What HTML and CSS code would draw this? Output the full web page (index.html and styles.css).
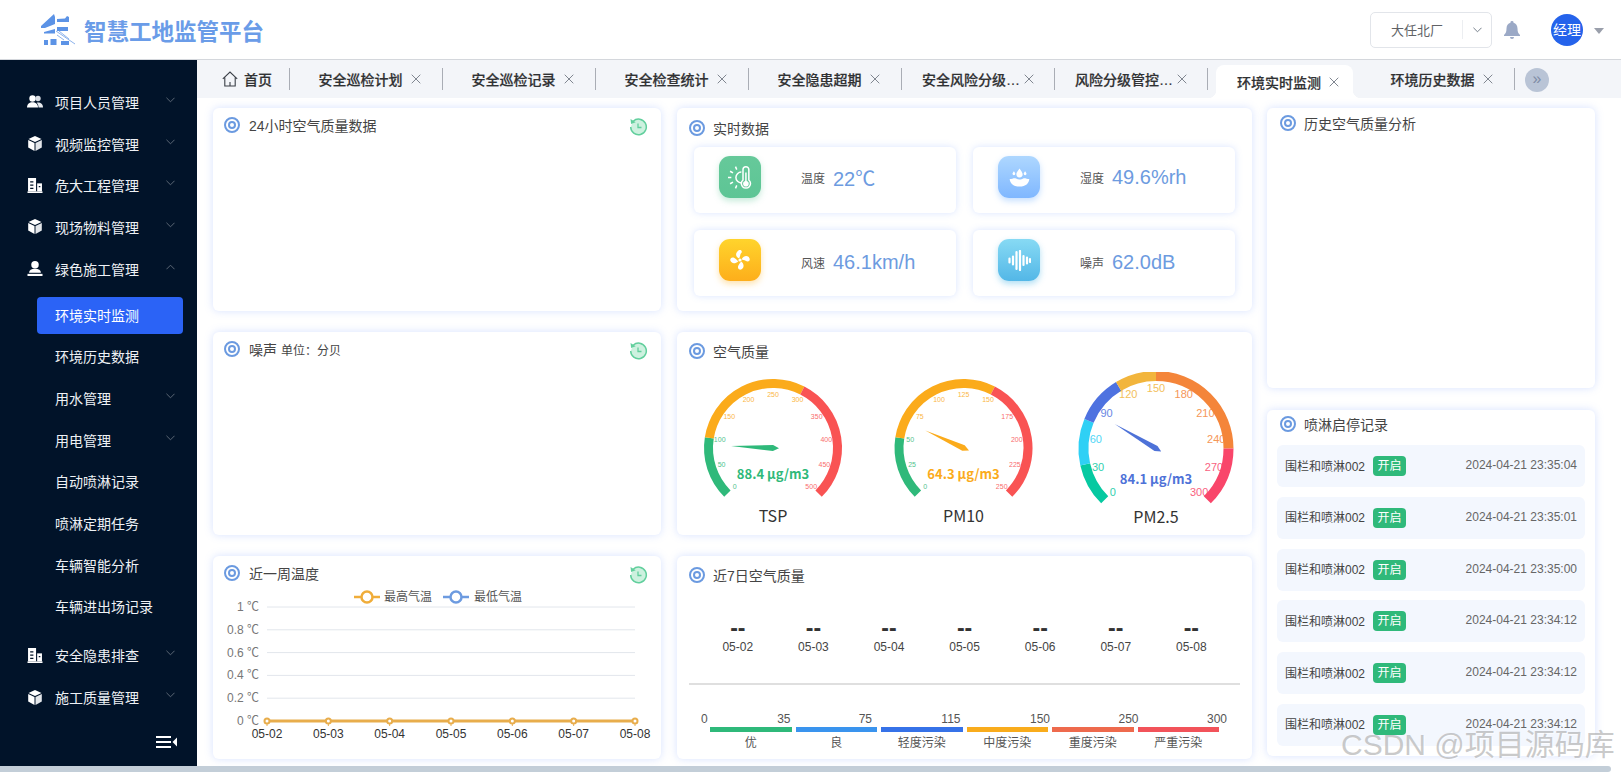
FILE: index.html
```html
<!doctype html>
<html>
<head>
  <meta charset="utf-8">
  <title>智慧工地监管平台</title>
  <link rel="stylesheet" href="styles.css">
</head>
<body>
  <svg class="defs" width="0" height="0">
    <symbol id="i-ring" viewBox="0 0 16 16"><circle cx="8" cy="8" r="7" fill="none" stroke="#6b9ae0" stroke-width="2"/><circle cx="8" cy="8" r="3" fill="none" stroke="#6b9ae0" stroke-width="2"/></symbol>
    <symbol id="i-close" viewBox="0 0 10 10"><path d="M.7.7l8.6 8.6M9.3.7L.7 9.3" fill="none" stroke="#808690" stroke-width="1"/></symbol>
    <symbol id="i-down" viewBox="0 0 10 6"><path d="M.5.5L5 5 9.500.5" fill="none" stroke="#66707e" stroke-width="1"/></symbol>
    <symbol id="i-up" viewBox="0 0 10 6"><path d="M.5 5.500L5 1l4.500 4.500" fill="none" stroke="#66707e" stroke-width="1"/></symbol>
    <symbol id="i-people" viewBox="0 0 16 14"><circle cx="5.500" cy="4" r="3.200" fill="#fff"/><circle cx="11" cy="4" r="2.700" fill="#d9dde3"/><path d="M0 13c0-3.500 2.500-5.300 5.500-5.300S11 9.500 11 13z" fill="#fff"/><path d="M11.500 13c0-2-.6-3.600-1.800-4.800 3.600-.6 6.300 1.400 6.300 4.800z" fill="#e8ebef"/></symbol>
    <symbol id="i-cube" viewBox="0 0 14 15"><path d="M7 0l6.500 3L7 6 .5 3z" fill="#fff"/><path d="M.2 4l6.300 2.900V15L.2 11.500z" fill="#fff"/><path d="M13.800 4L7.500 6.900V15l6.300-3.500z" fill="#e3e6ea"/></symbol>
    <symbol id="i-build" viewBox="0 0 14 14"><path d="M.5 0h7.500v12.500H.5z" fill="#fff"/><path d="M9 5h4.500v7.500H9z" fill="#fff"/><path d="M0 12.500h14V14H0z" fill="#fff"/><path d="M2.500 3h3v1.200h-3zM2.500 6h3v1.200h-3zM2.500 9h3v1.200h-3zM10.500 7.500h1.500v1.200h-1.500z" fill="#011329"/></symbol>
    <symbol id="i-user" viewBox="0 0 14 14"><circle cx="7" cy="3.500" r="3.500" fill="#fff"/><path d="M1.500 11c0-2.500 2-3.800 5.500-3.800s5.500 1.300 5.500 3.800z" fill="#fff"/><path d="M0 12h14v2H0z" fill="#fff"/></symbol>
    <symbol id="i-refresh" viewBox="0 0 19 19"><path d="M4.200 4.200A7.800 7.800 0 1 1 1.700 10" fill="#cdf1df" stroke="#62cf9d" stroke-width="1.500"/><path d="M1.500 2l.6 5 4.600-1.800z" fill="#62cf9d"/><path d="M9 6.500v4h3.500" fill="none" stroke="#62cf9d" stroke-width="1.300"/></symbol>
  </svg>

  <div class="header">
    <div class="logo">
      <svg class="logo-mark" viewBox="0 0 35 31">
        <path d="M0 12L13 0l1 3v7L4 14H0zM3 18l11-3v4.500H3zM3 26h4v5H3zM9.500 25h6v6h-6zM20 27h8v4h-8zM16 5l8-.5L26 2l2 1v5H16zM16 13h11v4H16z" fill="#5c93e6"/>
        <path d="M15 17l19 13M18 17l10 8M16 21l7 5" stroke="#8db3ec" stroke-width="1" fill="none"/>
      </svg>
      <span class="logo-text">智慧工地监管平台</span>
    </div>
    <div class="header-right">
      <div class="site-select">
        <span class="site-name">大任北厂</span>
        <span class="site-arrow"><svg width="9" height="6"><use href="#i-down"/></svg></span>
      </div>
      <svg class="bell" width="16" height="18" viewBox="0 0 16 18"><path d="M8 0a1.500 1.500 0 0 1 1.500 1.700C12 2.500 13.500 4.600 13.500 7.500c0 3.500.8 5 2.500 6.500v1H0v-1c1.700-1.500 2.500-3 2.500-6.500 0-2.900 1.500-5 4-5.800A1.500 1.500 0 0 1 8 0z" fill="#9ba9c6"/><path d="M6 16h4a2 2 0 0 1-4 0z" fill="#9ba9c6"/></svg>
      <div class="avatar">经理</div>
      <span class="caret"></span>
    </div>
  </div>

  <div class="layout">
    <div class="sidebar">
      <div class="nav">
        <div class="nav-item"><svg class="nav-icon"><use href="#i-people"/></svg>项目人员管理<svg class="chev" width="9" height="6"><use href="#i-down"/></svg></div>
        <div class="nav-item"><svg class="nav-icon"><use href="#i-cube"/></svg>视频监控管理<svg class="chev" width="9" height="6"><use href="#i-down"/></svg></div>
        <div class="nav-item"><svg class="nav-icon"><use href="#i-build"/></svg>危大工程管理<svg class="chev" width="9" height="6"><use href="#i-down"/></svg></div>
        <div class="nav-item"><svg class="nav-icon"><use href="#i-cube"/></svg>现场物料管理<svg class="chev" width="9" height="6"><use href="#i-down"/></svg></div>
        <div class="nav-item"><svg class="nav-icon"><use href="#i-user"/></svg>绿色施工管理<svg class="chev" width="9" height="6"><use href="#i-up"/></svg></div>
        <div class="nav-sub">
          <div class="nav-item sub active">环境实时监测</div>
          <div class="nav-item sub">环境历史数据</div>
          <div class="nav-item sub">用水管理<svg class="chev" width="9" height="6"><use href="#i-down"/></svg></div>
          <div class="nav-item sub">用电管理<svg class="chev" width="9" height="6"><use href="#i-down"/></svg></div>
          <div class="nav-item sub">自动喷淋记录</div>
          <div class="nav-item sub">喷淋定期任务</div>
          <div class="nav-item sub">车辆智能分析</div>
          <div class="nav-item sub">车辆进出场记录</div>
        </div>
        <div class="nav-item"><svg class="nav-icon"><use href="#i-build"/></svg>安全隐患排查<svg class="chev" width="9" height="6"><use href="#i-down"/></svg></div>
        <div class="nav-item"><svg class="nav-icon"><use href="#i-cube"/></svg>施工质量管理<svg class="chev" width="9" height="6"><use href="#i-down"/></svg></div>
      </div>
      <svg class="collapse" width="21" height="12" viewBox="0 0 21 12"><path d="M0 0h15v2H0zM0 5h15v2H0zM0 10h15v2H0z" fill="#fff"/><path d="M21 1.500v9L16.500 6z" fill="#fff"/></svg>
    </div>

    <div class="main">
      <div class="tabs">
        <div class="tab home">
          <svg width="16" height="16" viewBox="0 0 16 16"><path d="M.8 7.800L8 1l7.200 6.800M2.800 6.500V15h10.400V6.500M8 11v4" fill="none" stroke="#3a3f47" stroke-width="1.100"/></svg>
          <span>首页</span>
        </div>
        <i class="sep"></i>
        <div class="tab"><span class="tab-text">安全巡检计划</span><svg class="x" width="10" height="10"><use href="#i-close"/></svg></div>
        <i class="sep"></i>
        <div class="tab"><span class="tab-text">安全巡检记录</span><svg class="x" width="10" height="10"><use href="#i-close"/></svg></div>
        <i class="sep"></i>
        <div class="tab"><span class="tab-text">安全检查统计</span><svg class="x" width="10" height="10"><use href="#i-close"/></svg></div>
        <i class="sep"></i>
        <div class="tab"><span class="tab-text">安全隐患超期</span><svg class="x" width="10" height="10"><use href="#i-close"/></svg></div>
        <i class="sep"></i>
        <div class="tab long"><span class="tab-text">安全风险分级管控清单</span><svg class="x" width="10" height="10"><use href="#i-close"/></svg></div>
        <i class="sep"></i>
        <div class="tab long"><span class="tab-text">风险分级管控措施清单</span><svg class="x" width="10" height="10"><use href="#i-close"/></svg></div>
        <i class="sep"></i>
        <div class="tab active"><span class="tab-text">环境实时监测</span><svg class="x" width="10" height="10"><use href="#i-close"/></svg></div>
        <i class="sep none"></i>
        <div class="tab"><span class="tab-text">环境历史数据</span><svg class="x" width="10" height="10"><use href="#i-close"/></svg></div>
        <i class="sep"></i>
        <div class="tab-more">»</div>
      </div>

      <div class="board">
        <div class="col col-left">
          <div class="card">
            <div class="card-title"><svg class="ring"><use href="#i-ring"/></svg>24小时空气质量数据<svg class="refresh"><use href="#i-refresh"/></svg></div>
          </div>
          <div class="card">
            <div class="card-title"><svg class="ring"><use href="#i-ring"/></svg>噪声<span class="unit">单位：分贝</span><svg class="refresh"><use href="#i-refresh"/></svg></div>
          </div>
          <div class="card">
            <div class="card-title"><svg class="ring"><use href="#i-ring"/></svg>近一周温度<svg class="refresh"><use href="#i-refresh"/></svg></div>
            <svg id="tempChart" class="chart" width="448" height="169"></svg>
          </div>
        </div>

        <div class="col col-mid">
          <div class="card">
            <div class="card-title low"><svg class="ring"><use href="#i-ring"/></svg>实时数据</div>
            <div class="stats">
              <div class="stat">
                <div class="stat-icon green">
                  <svg width="25" height="25" viewBox="0 0 30 30" fill="none" stroke="#fff" stroke-width="1.800"><path d="M16 8.500a6.500 6.500 0 1 0 0 13"/><path d="M9 2l1.500 3.500M2.500 7.500L6 9.500M0 15h4M2.500 22.500L6 20.500M9 28l1.500-3.500"/><path d="M18 18V5.500a3.500 3.500 0 0 1 7 0V18a5.500 5.500 0 1 1-7 0z"/><circle cx="21.500" cy="22.500" r="2.500" fill="#fff"/><path d="M21.500 9v13"/></svg>
                </div>
                <span class="stat-label">温度</span><span class="stat-value">22℃</span>
              </div>
              <div class="stat">
                <div class="stat-icon blue">
                  <svg width="21" height="21" viewBox="0 0 30 30" fill="#fff"><path d="M15 2c2.500 3.500 4.500 6 4.500 8.500a4.500 4.500 0 0 1-9 0C10.500 8 12.500 5.500 15 2z"/><path d="M7 6c1.200 1.600 2 2.800 2 3.800a2 2 0 0 1-4 0C5 8.800 5.800 7.600 7 6zM23 6c1.200 1.600 2 2.800 2 3.800a2 2 0 0 1-4 0c0-1 .8-2.200 2-3.800z"/><path d="M1 17c3 0 6-1.500 8-1 2 .8 4 2 6 2s4-1.200 6-2c2-.5 5 1 8 1-.5 6-5 11-14 11S1.500 23 1 17z"/></svg>
                </div>
                <span class="stat-label">湿度</span><span class="stat-value">49.6%rh</span>
              </div>
              <div class="stat">
                <div class="stat-icon yellow">
                  <svg width="24" height="24" viewBox="0 0 30 30" fill="#fff"><circle cx="15" cy="15" r="2"/><path d="M14 13C9 11 9 6 13 3c3-1.500 6 1 3 4-1 2-1 4-2 6z"/><path d="M17 14c3-5 8-5 10-1 1 3-2 5-5 3-2-1-3-1-5-2z"/><path d="M16.500 17c4 3 4 8 0 10-3 1-5-2-3.500-5 1-2 2-3 3.500-5z"/><path d="M13 16.500C9 20 5 20 3 16c-1-3 2-5 5-3.500 2 1 3 3 5 4z"/></svg>
                </div>
                <span class="stat-label">风速</span><span class="stat-value">46.1km/h</span>
              </div>
              <div class="stat">
                <div class="stat-icon cyan">
                  <svg width="23" height="21" viewBox="0 0 23 21" fill="none" stroke="#fff" stroke-width="2.200" stroke-linecap="round"><path d="M1.500 8.500v4M5 6.500v8M8.500 2v17M12 1v19M15.500 6v9M19 7.500v6M22 9v3"/></svg>
                </div>
                <span class="stat-label">噪声</span><span class="stat-value">62.0dB</span>
              </div>
            </div>
          </div>
          <div class="card">
            <div class="card-title low up"><svg class="ring"><use href="#i-ring"/></svg>空气质量</div>
            <svg id="gauges" class="chart" width="575" height="163"></svg>
          </div>
          <div class="card">
            <div class="card-title low up"><svg class="ring"><use href="#i-ring"/></svg>近7日空气质量</div>
            <div class="days">
              <div class="day"><b>--</b><span>05-02</span></div>
              <div class="day"><b>--</b><span>05-03</span></div>
              <div class="day"><b>--</b><span>05-04</span></div>
              <div class="day"><b>--</b><span>05-05</span></div>
              <div class="day"><b>--</b><span>05-06</span></div>
              <div class="day"><b>--</b><span>05-07</span></div>
              <div class="day"><b>--</b><span>05-08</span></div>
            </div>
            <div class="divider"></div>
            <div class="scale">
              <span class="zero">0</span>
              <div class="seg"><div class="num">35</div><div class="bar c1"></div><div class="lvl">优</div></div>
              <div class="seg"><div class="num">75</div><div class="bar c2"></div><div class="lvl">良</div></div>
              <div class="seg"><div class="num">115</div><div class="bar c3"></div><div class="lvl">轻度污染</div></div>
              <div class="seg"><div class="num">150</div><div class="bar c4"></div><div class="lvl">中度污染</div></div>
              <div class="seg"><div class="num">250</div><div class="bar c5"></div><div class="lvl">重度污染</div></div>
              <div class="seg"><div class="num">300</div><div class="bar c6"></div><div class="lvl">严重污染</div></div>
            </div>
          </div>
        </div>

        <div class="col col-right">
          <div class="card history">
            <div class="card-title high"><svg class="ring"><use href="#i-ring"/></svg>历史空气质量分析</div>
          </div>
          <div class="card records">
            <div class="card-title high up"><svg class="ring"><use href="#i-ring"/></svg>喷淋启停记录</div>
            <div class="rec-list">
              <div class="rec"><span class="rec-name">围栏和喷淋002</span><span class="tag">开启</span><span class="rec-time">2024-04-21 23:35:04</span></div>
              <div class="rec"><span class="rec-name">围栏和喷淋002</span><span class="tag">开启</span><span class="rec-time">2024-04-21 23:35:01</span></div>
              <div class="rec"><span class="rec-name">围栏和喷淋002</span><span class="tag">开启</span><span class="rec-time">2024-04-21 23:35:00</span></div>
              <div class="rec"><span class="rec-name">围栏和喷淋002</span><span class="tag">开启</span><span class="rec-time">2024-04-21 23:34:12</span></div>
              <div class="rec"><span class="rec-name">围栏和喷淋002</span><span class="tag">开启</span><span class="rec-time">2024-04-21 23:34:12</span></div>
              <div class="rec"><span class="rec-name">围栏和喷淋002</span><span class="tag">开启</span><span class="rec-time">2024-04-21 23:34:12</span></div>
            </div>
          </div>
        </div>
      </div>
    </div>
  </div>

  <div class="hscroll"></div>
  <div class="watermark">CSDN @项目源码库</div>

  <script src="app.js"></script>
</body>
</html>
```

FILE: styles.css
```css
* {
  box-sizing: border-box;
}
html, body {
  margin: 0;
  height: 772px;
  overflow: hidden;
  background: #fff;
  font-family: "Liberation Sans", "Noto Sans CJK SC", sans-serif;
  font-size: 14px;
  color: #333;
}
.defs {
  display: none;
}

/* header */
.header {
  height: 60px;
  display: flex;
  align-items: center;
  justify-content: space-between;
  background: #fff;
  border-bottom: 1px solid #d4d7dc;
}
.logo {
  display: flex;
  align-items: center;
  padding-left: 41px;
}
.logo-mark {
  width: 35px;
  height: 31px;
  margin-right: 8px;
}
.logo-text {
  font-size: 22.500px;
  font-weight: bold;
  color: #6a9ce8;
}
.header-right {
  display: flex;
  align-items: center;
  padding-right: 17px;
}
.site-select {
  width: 122px;
  height: 36px;
  display: flex;
  align-items: center;
  border: 1px solid #e2e5ea;
  border-radius: 5px;
}
.site-name {
  width: 92px;
  padding-left: 20px;
  font-size: 13px;
  color: #606266;
  border-right: 1px solid #eceef1;
}
.site-arrow {
  flex: 1;
  display: flex;
  justify-content: center;
}
.bell {
  margin-left: 12px;
}
.avatar {
  width: 32px;
  height: 32px;
  margin-left: 31px;
  border-radius: 50%;
  background: #2563eb;
  color: #fff;
  font-size: 14px;
  line-height: 32px;
  text-align: center;
}
.caret {
  width: 0;
  height: 0;
  margin-left: 11px;
  margin-top: 3px;
  border-left: 5px solid transparent;
  border-right: 5px solid transparent;
  border-top: 6px solid #9a9fab;
}

.layout {
  display: flex;
  height: 706px;
}

/* sidebar */
.sidebar {
  width: 197px;
  flex: none;
  display: flex;
  flex-direction: column;
  background: #011329;
  color: #eef1f5;
  padding-top: 22px;
}
.nav-item {
  height: 41.700px;
  display: flex;
  align-items: center;
  padding: 0 22px 2px 27px;
}
.nav-icon {
  width: 16px;
  height: 15px;
  margin-right: 12px;
  flex: none;
}
.chev {
  margin-left: auto;
  margin-bottom: 4px;
}
.nav-sub {
  padding: 4.300px 0 7.400px;
}
.nav-item.sub {
  padding-left: 55px;
}
.nav-item.active {
  height: 37px;
  margin: 2.350px 14px 2.350px 37px;
  padding-left: 18px;
  border-radius: 4px;
  background: #2b63f6;
  color: #fff;
}
.collapse {
  margin-top: auto;
  margin-left: auto;
  margin-right: 20px;
  margin-bottom: 18px;
}

/* tabs */
.main {
  flex: 1;
  min-width: 0;
}
.tabs {
  height: 38px;
  display: flex;
  padding-left: 16px;
  background: #f3f5f9;
}
.tab {
  width: 152px;
  flex: none;
  display: flex;
  align-items: center;
  justify-content: center;
  padding-left: 7px;
  color: #303133;
  font-weight: 500;
  -webkit-text-stroke: 0.200px #303133;
}
.tab-text {
  white-space: nowrap;
}
.x {
  margin-left: 8px;
  flex: none;
}
.tab.home {
  width: 76px;
  justify-content: flex-start;
  padding-left: 9px;
}
.tab.home span {
  margin-left: 6px;
}
.tab.long {
  padding-left: 0;
}
.tab.long .tab-text {
  width: 98px;
  overflow: hidden;
  text-overflow: ellipsis;
}
.tab.long .x {
  margin-left: 4px;
}
.tab.active {
  position: relative;
  margin: 5px 8px 0;
  width: 137px;
  background: #fff;
  border-radius: 8px 8px 0 0;
}
.tab.active::before,
.tab.active::after {
  content: "";
  position: absolute;
  bottom: 0;
  width: 8px;
  height: 8px;
}
.tab.active::before {
  left: -8px;
  background: radial-gradient(circle at 0 0, #f3f5f9 8px, #fff 8.500px);
}
.tab.active::after {
  right: -8px;
  background: radial-gradient(circle at 100% 0, #f3f5f9 8px, #fff 8.500px);
}
.sep {
  width: 1px;
  height: 22px;
  flex: none;
  align-self: center;
  background: #a9adb5;
}
.sep.none {
  background: transparent;
}
.tab-more {
  width: 24px;
  height: 24px;
  margin: 8px 0 0 10px;
  border-radius: 50%;
  background: #b9c4d6;
  color: #7f8ca6;
  font-size: 16px;
  line-height: 21px;
  text-align: center;
}

/* board */
.board {
  display: flex;
  padding: 10px 0 0 16px;
}
.col {
  display: flex;
  flex-direction: column;
  flex: none;
}
.col-left {
  width: 448px;
  gap: 21px;
  margin-right: 16px;
}
.col-mid {
  width: 575px;
  gap: 21px;
  margin-right: 15px;
}
.col-right {
  width: 328px;
  gap: 22px;
}
.card {
  height: 203px;
  background: #fff;
  border-radius: 6px;
  box-shadow: 0 0 8px rgba(110, 150, 255, 0.28);
}
.history {
  height: 280px;
}
.records {
  height: 346px;
}
.card-title {
  height: 34px;
  display: flex;
  align-items: center;
  padding: 0 12px;
  color: #444;
}
.col-left .card-title {
  padding-left: 11px;
}
.col-left .ring {
  margin-right: 9px;
}
.col-right .card-title {
  padding-left: 13px;
}
.card-title.low {
  height: 40px;
}
.card-title.high {
  height: 30px;
}
.card-title.up {
  padding-bottom: 2px;
}
.ring {
  width: 16px;
  height: 16px;
  margin-right: 8px;
  flex: none;
}
.refresh {
  width: 19px;
  height: 19px;
  margin-left: auto;
  margin-right: 1px;
  margin-top: 2px;
}
.unit {
  margin-left: 4px;
  font-size: 12px;
}
.chart {
  display: block;
}
.chart text {
  font-family: "Liberation Sans", "Noto Sans CJK SC", sans-serif;
}
.chart text.cjk {
  font-family: "Noto Sans CJK SC", sans-serif;
}

/* realtime stats */
.stats {
  display: grid;
  grid-template-columns: 262px 262px;
  grid-auto-rows: 66px;
  gap: 17px;
  margin: -1px 0 0 17px;
}
.stat {
  display: flex;
  align-items: center;
  padding: 0 0 6px 25px;
  border-radius: 6px;
  background: #fff;
  box-shadow: 0 0 7px rgba(110, 150, 255, 0.26);
}
.stat:nth-child(n+3) {
  padding-bottom: 2px;
}
.stat:nth-child(n+3) .stat-icon {
  margin-top: -4px;
}
.stat-icon {
  width: 42px;
  height: 42px;
  margin: 0 40px 0 0;
  display: flex;
  align-items: center;
  justify-content: center;
  flex: none;
  border-radius: 11px;
}
.stat-icon.green {
  background: linear-gradient(#66c99a, #5dc595);
  box-shadow: 0 3px 6px rgba(93, 197, 149, 0.35);
}
.stat-icon.blue {
  background: linear-gradient(#aed7ff, #7fb7ff);
  box-shadow: 0 3px 6px rgba(127, 183, 255, 0.45);
}
.stat-icon.yellow {
  background: linear-gradient(#ffd42c, #fdae1b);
  box-shadow: 0 3px 6px rgba(253, 174, 27, 0.35);
}
.stat-icon.cyan {
  background: linear-gradient(#87daf4, #53b7e7);
  box-shadow: 0 3px 6px rgba(83, 183, 231, 0.45);
}
.stat-label {
  width: 32px;
  font-size: 12px;
  color: #555;
}
.stat-value {
  font-size: 20px;
  color: #6d9be0;
}

/* seven days */
.days {
  display: grid;
  grid-template-columns: repeat(7, 75.600px);
  padding: 24px 0 0 23px;
  text-align: center;
}
.day b {
  display: block;
  font-size: 23px;
  line-height: 16px;
  margin-bottom: 3px;
  color: #333;
}
.day span {
  display: block;
  font-size: 12px;
  line-height: 16px;
  color: #444;
}
.divider {
  height: 2px;
  margin: 28px 12px 0;
  background: #dfdfdf;
}
.scale {
  position: relative;
  display: flex;
  gap: 4px;
  padding: 27px 0 0 33px;
}
.zero {
  position: absolute;
  left: 24px;
  top: 27px;
  font-size: 12px;
  line-height: 15px;
  color: #555;
}
.seg {
  width: 81.500px;
  flex: none;
}
.num {
  font-size: 12px;
  line-height: 15px;
  text-align: right;
  color: #555;
}
.seg:nth-of-type(1) .num { margin-right: 1px; }
.seg:nth-of-type(2) .num { margin-right: 5px; }
.seg:nth-of-type(3) .num { margin-right: 2px; }
.seg:nth-of-type(4) .num { margin-right: -2px; }
.seg:nth-of-type(5) .num { margin-right: -5px; }
.seg:nth-of-type(6) .num { margin-right: -8px; }
.bar {
  height: 5px;
}
.c1 { background: #2fb97a; }
.c2 { background: #3a94ee; }
.c3 { background: #3672e8; }
.c4 { background: #f9ac1c; }
.c5 { background: #ee6a4d; }
.c6 { background: #f2535a; }
.lvl {
  margin-top: 3px;
  font-size: 12px;
  line-height: 16px;
  text-align: center;
  color: #555;
}

/* spray records */
.rec-list {
  display: flex;
  flex-direction: column;
  gap: 9.800px;
  padding: 5px 10px 0;
}
.rec {
  height: 42px;
  display: flex;
  align-items: center;
  padding: 0 8px 2px;
  border-radius: 6px;
  background: #f3f7fe;
  font-size: 12px;
}
.rec-name {
  color: #444;
}
.tag {
  width: 33px;
  height: 20px;
  margin: 2px 0 0 8px;
  border-radius: 4px;
  background: #2fb97a;
  color: #fff;
  line-height: 20px;
  text-align: center;
}
.rec-time {
  margin-left: auto;
  color: #666;
}

/* bottom scrollbar */
.hscroll {
  width: 1611px;
  height: 6px;
  border-radius: 0 3px 3px 0;
  background: #c3ced8;
}
.watermark {
  position: absolute;
  left: 1341px;
  top: 724px;
  font-size: 30px;
  line-height: 42px;
  white-space: nowrap;
  color: rgba(150, 150, 150, 0.5);
  text-shadow: 1px 1px 1px rgba(255, 255, 255, 0.7);
}
```

FILE: app.js
```js
var gauges = [
  { name: 'TSP', text: '88.4 μg/m3', cx: 96, cy: 76, r: 64.5, w: 9, max: 500, step: 50, val: 88.4, len: 42, font: 7, labelR: 54, textY: 107, nameY: 150, color: '#2fb97a',
    segs: [[0.2, '#2fb97a'], [0.6, '#fbab1b'], [1, '#f95353']] },
  { name: 'PM10', text: '64.3 μg/m3', cx: 286.5, cy: 76, r: 64.5, w: 9, max: 250, step: 25, val: 64.3, len: 42, font: 7, labelR: 54, textY: 107, nameY: 150, color: '#fbab1b',
    segs: [[0.2, '#2fb97a'], [0.6, '#fbab1b'], [1, '#f95353']] },
  { name: 'PM2.5', text: '84.1 μg/m3', cx: 479, cy: 76.500, r: 72.500, w: 10, max: 300, step: 30, val: 84.1, len: 48, font: 11, labelR: 61, textY: 112, nameY: 151, color: '#4e72d8',
    segs: [[0.12, '#06c9a1'], [0.25, '#2fd0f5'], [0.385, '#4e72e0'], [0.5, '#f2b53c'], [0.833, '#f4853a'], [1, '#f9466a']] }
];

function pointAt(g, r, deg) {
  var a = deg * Math.PI / 180;
  return [g.cx + r * Math.cos(a), g.cy - r * Math.sin(a)];
}

function fix(p) {
  return p[0].toFixed(1) + ' ' + p[1].toFixed(1);
}

function segColor(g, frac) {
  for (var i = 0; i < g.segs.length; i++) {
    if (frac <= g.segs[i][0] + 0.001) return g.segs[i][1];
  }
  return g.segs[g.segs.length - 1][1];
}

function drawGauge(g) {
  var markup = '';
  var from = 0;
  // coloured arc
  for (var i = 0; i < g.segs.length; i++) {
    var to = g.segs[i][0];
    var a = pointAt(g, g.r, 225 - from * 270);
    var b = pointAt(g, g.r, 225 - to * 270);
    var large = (to - from) * 270 > 180 ? 1 : 0;
    markup += "<path d='M" + fix(a) + " A" + g.r + " " + g.r + " 0 " + large + " 1 " + fix(b) + "' fill='none' stroke='" + g.segs[i][1] + "' stroke-width='" + g.w + "'/>";
    from = to;
  }
  // scale labels
  for (var v = 0; v <= g.max; v += g.step) {
    var frac = v / g.max;
    var p = pointAt(g, g.labelR, 225 - frac * 270);
    markup += "<text x='" + p[0].toFixed(1) + "' y='" + (p[1] + g.font * 0.36).toFixed(1) + "' font-size='" + g.font + "' text-anchor='middle' fill='" + segColor(g, frac) + "' opacity='0.85'>" + v + "</text>";
  }
  // needle
  var deg = 225 - g.val / g.max * 270;
  var tip = pointAt(g, g.len, deg);
  var tail = pointAt(g, -6, deg);
  var s1 = pointAt(g, 3, deg + 90);
  var s2 = pointAt(g, 3, deg - 90);
  markup += "<polygon points='" + fix(tip) + " " + fix(s1) + " " + fix(tail) + " " + fix(s2) + "' fill='" + g.color + "'/>";
  markup += "<text class='cjk' x='" + g.cx + "' y='" + g.textY + "' font-size='13' font-weight='bold' text-anchor='middle' fill='" + g.color + "'>" + g.text + "</text>";
  markup += "<text class='cjk' x='" + g.cx + "' y='" + g.nameY + "' font-size='16' text-anchor='middle' fill='#333'>" + g.name + "</text>";
  return markup;
}

var markup = '';
for (var i = 0; i < gauges.length; i++) {
  markup += drawGauge(gauges[i]);
}
document.getElementById('gauges').innerHTML = markup;

// week temperature chart
function drawTemp() {
  var out = '';
  var rows = ['1 ℃', '0.8 ℃', '0.6 ℃', '0.4 ℃', '0.2 ℃', '0 ℃'];
  var dates = ['05-02', '05-03', '05-04', '05-05', '05-06', '05-07', '05-08'];
  var left = 54, right = 422, top = 17, gap = 22.800;
  for (var r = 0; r < rows.length; r++) {
    var y = top + r * gap;
    out += "<line x1='" + left + "' x2='" + right + "' y1='" + y + "' y2='" + y + "' stroke='#e2e6ec'/>";
    out += "<text x='46' y='" + (y + 4) + "' font-size='12' text-anchor='end' fill='#777'>" + rows[r] + "</text>";
  }
  var base = top + 5 * gap;
  out += "<line x1='" + left + "' x2='" + right + "' y1='" + base + "' y2='" + base + "' stroke='#e8ad4c' stroke-width='3'/>";
  for (var d = 0; d < dates.length; d++) {
    var x = left + d * (right - left) / 6;
    out += "<line x1='" + x + "' x2='" + x + "' y1='" + base + "' y2='" + (base + 5) + "' stroke='#e8ad4c'/>";
    out += "<circle cx='" + x + "' cy='" + base + "' r='2.500' fill='#fff' stroke='#e8ad4c' stroke-width='2'/>";
    out += "<text x='" + x + "' y='" + (base + 17) + "' font-size='12' text-anchor='middle' fill='#333'>" + dates[d] + "</text>";
  }
  // legend
  out += "<line x1='141' x2='167' y1='7' y2='7' stroke='#f0ad3a' stroke-width='2.500'/><circle cx='154' cy='7' r='5.500' fill='#fff' stroke='#f0ad3a' stroke-width='2.500'/>";
  out += "<text x='171' y='11' font-size='12' fill='#555'>最高气温</text>";
  out += "<line x1='230' x2='256' y1='7' y2='7' stroke='#6d9be0' stroke-width='2.500'/><circle cx='243' cy='7' r='5.500' fill='#fff' stroke='#6d9be0' stroke-width='2.500'/>";
  out += "<text x='261' y='11' font-size='12' fill='#555'>最低气温</text>";
  return out;
}
document.getElementById('tempChart').innerHTML = drawTemp();
```
